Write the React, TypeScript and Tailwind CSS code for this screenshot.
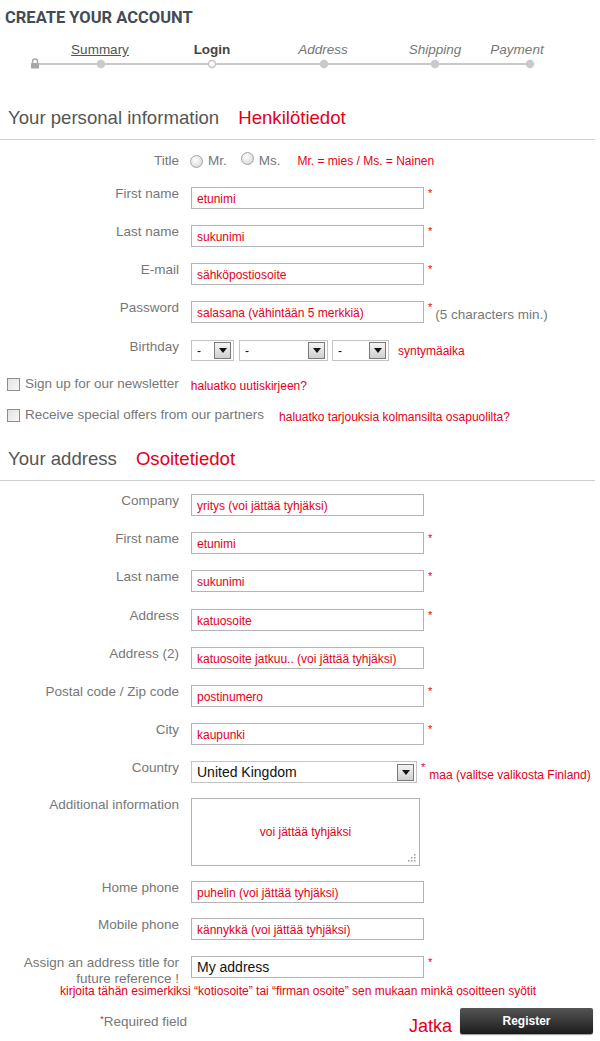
import React from "react";

const red = "text-[#e2001a]";

function Label({ children }: { children: React.ReactNode }) {
  return (
    <div className="w-[179px] shrink-0 text-right text-[13.5px] leading-4 text-[#777] -mt-[1px]">
      {children}
    </div>
  );
}

function Star() {
  return <span className={`${red} text-[11px] leading-none ml-[4px] mt-[1px]`}>*</span>;
}

function TextBox({ value, dark, w = "w-[233px]" }: { value: string; dark?: boolean; w?: string }) {
  return (
    <div
      className={`${w} h-[22px] shrink-0 border border-[#b4b4b4] bg-white pl-[5px] pt-[1px] flex items-center whitespace-nowrap overflow-hidden ${
        dark ? "text-[14px] text-[#111]" : `text-[12px] ${red}`
      }`}
    >
      {value}
    </div>
  );
}

function Row({
  label,
  value,
  req,
  mt,
  dark,
  extra,
}: {
  label: React.ReactNode;
  value: string;
  req?: boolean;
  mt: string;
  dark?: boolean;
  extra?: React.ReactNode;
}) {
  return (
    <div className={`flex items-start gap-[12px] ${mt}`}>
      <Label>{label}</Label>
      <div className="flex items-start">
        <TextBox value={value} dark={dark} />
        {req && <Star />}
        {extra}
      </div>
    </div>
  );
}

function Arrow() {
  return (
    <span className="w-[17px] h-[17px] border border-[#7a7a7a] bg-[linear-gradient(#f4f4f4,#cfcfcf)] flex items-center justify-center">
      <svg width="8" height="5" viewBox="0 0 8 5">
        <path d="M0 0 L8 0 L4 5 Z" fill="#111" />
      </svg>
    </span>
  );
}

function Select({ w, value, big }: { w: string; value: string; big?: boolean }) {
  return (
    <div
      className={`${w} ${big ? "h-[22px]" : "h-[21px]"} border border-[#c4c4c4] bg-white flex items-center justify-between pl-[5px] pr-[2px] ${
        big ? "text-[14px] text-[#111]" : "text-[12px] text-[#111]"
      }`}
    >
      <span>{value}</span>
      <Arrow />
    </div>
  );
}

function Radio() {
  return (
    <span className="inline-block w-[13px] h-[13px] rounded-full border border-[#a3a3a3] bg-[radial-gradient(circle_at_40%_35%,#ffffff,#cfcfcf)]" />
  );
}

function Check() {
  return (
    <span className="inline-block w-[13px] h-[13px] border border-[#8e8e8e] bg-[linear-gradient(135deg,#e2e2e2,#f8f8f8)] shrink-0" />
  );
}

function Heading({ en, fi, mt }: { en: string; fi: string; mt: string }) {
  return (
    <>
      <div className={`flex items-center pl-[8px] ${mt} text-[18.6px] leading-[22px]`}>
        <span className="text-[#555]">{en}</span>
        <span className={`${red} ml-[19px]`}>{fi}</span>
      </div>
      <div className="mt-[10px] mr-[5px] border-t border-[#cfcfcf]" />
    </>
  );
}

function Steps() {
  const labels: { t: string; x: number; cls: string }[] = [
    { t: "Summary", x: 100, cls: "underline text-[#555]" },
    { t: "Login", x: 212, cls: "font-bold text-[#444]" },
    { t: "Address", x: 323, cls: "italic text-[#777]" },
    { t: "Shipping", x: 435, cls: "italic text-[#777]" },
    { t: "Payment", x: 517, cls: "italic text-[#777]" },
  ];
  const dots = [101, 324, 435, 530];
  return (
    <div className="mt-[15px]">
      <div className="relative h-[16px]">
        {labels.map((l) => (
          <span
            key={l.t}
            className={`absolute top-0 -translate-x-1/2 text-[13.5px] leading-4 whitespace-nowrap ${l.cls}`}
            style={{ left: l.x }}
          >
            {l.t}
          </span>
        ))}
      </div>
      <svg className="block -mt-[1px]" width="600" height="14" viewBox="0 0 600 14">
        <line x1="36" y1="7" x2="530" y2="7" stroke="#c9c9c9" strokeWidth="2" />
        {dots.map((x) => (
          <circle key={x} cx={x} cy="7" r="4.2" fill="#c9c9c9" />
        ))}
        <circle cx="212" cy="7" r="3.5" fill="#fff" stroke="#c4c4c4" strokeWidth="1.5" />
        <path d="M32.5 6 V4.5 a2.5 2.5 0 0 1 5 0 V6" fill="none" stroke="#a6a6a6" strokeWidth="1.4" />
        <rect x="31" y="6" width="8" height="5.5" rx="0.8" fill="#a6a6a6" />
      </svg>
    </div>
  );
}

export default function App() {
  return (
    <div className="w-[600px] h-[1041px] bg-white overflow-hidden font-['Liberation_Sans',Arial,sans-serif]">
      <h1 className="pt-[9px] pl-[5px] text-[16.5px] leading-[18px] font-bold text-[#434b55] font-['Roboto',Arial,sans-serif]">
        CREATE YOUR ACCOUNT
      </h1>
      <Steps />

      <Heading en="Your personal information" fi="Henkilötiedot" mt="mt-[36px]" />

      {/* Title */}
      <div className="flex items-center gap-[11px] mt-[10px] h-[22px]">
        <div className="w-[179px] text-right text-[13.5px] leading-4 text-[#777]">Title</div>
        <div className="flex items-center text-[13.5px] text-[#777]">
          <Radio />
          <span className="ml-[5px]">Mr.</span>
          <span className="ml-[14px]">
            <Radio />
          </span>
          <span className="ml-[5px]">Ms.</span>
          <span className={`${red} text-[12px] ml-[17px]`}>Mr. = mies / Ms. = Nainen</span>
        </div>
      </div>

      <Row label="First name" value="etunimi" req mt="mt-[15px]" />
      <Row label="Last name" value="sukunimi" req mt="mt-[16px]" />
      <Row label="E-mail" value="sähköpostiosoite" req mt="mt-[16px]" />
      <Row
        label="Password"
        value="salasana (vähintään 5 merkkiä)"
        req
        mt="mt-[16px]"
        extra={<span className="text-[13.5px] text-[#777] ml-[3px] mt-[4px] whitespace-nowrap">(5 characters min.)</span>}
      />

      {/* Birthday */}
      <div className="flex items-start gap-[12px] mt-[15px]">
        <Label>Birthday</Label>
        <div className="flex items-center">
          <Select w="w-[43px]" value="-" />
          <span className="ml-[5px]">
            <Select w="w-[89px]" value="-" />
          </span>
          <span className="ml-[4px]">
            <Select w="w-[57px]" value="-" />
          </span>
          <span className={`${red} text-[12px] ml-[9px]`}>syntymäaika</span>
        </div>
      </div>

      {/* Checkboxes */}
      <div className="flex items-center pl-[7px] mt-[15px] h-[16px]">
        <Check />
        <span className="ml-[5px] text-[13.5px] text-[#777]">Sign up for our newsletter</span>
        <span className={`${red} text-[12px] ml-[12px] mt-[3px]`}>haluatko uutiskirjeen?</span>
      </div>
      <div className="flex items-center pl-[7px] mt-[15px] h-[16px]">
        <Check />
        <span className="ml-[5px] text-[13.5px] text-[#777]">Receive special offers from our partners</span>
        <span className={`${red} text-[12px] ml-[15px] mt-[3px]`}>haluatko tarjouksia kolmansilta osapuolilta?</span>
      </div>

      <Heading en="Your address" fi="Osoitetiedot" mt="mt-[25px]" />

      <Row label="Company" value="yritys (voi jättää tyhjäksi)" mt="mt-[13px]" />
      <Row label="First name" value="etunimi" req mt="mt-[16px]" />
      <Row label="Last name" value="sukunimi" req mt="mt-[16px]" />
      <Row label="Address" value="katuosoite" req mt="mt-[17px]" />
      <Row label="Address (2)" value="katuosoite jatkuu.. (voi jättää tyhjäksi)" mt="mt-[16px]" />
      <Row label="Postal code / Zip code" value="postinumero" req mt="mt-[16px]" />
      <Row label="City" value="kaupunki" req mt="mt-[16px]" />

      {/* Country */}
      <div className="flex items-start gap-[12px] mt-[16px]">
        <Label>Country</Label>
        <div className="flex items-start">
          <Select w="w-[226px]" value="United Kingdom" big />
          <Star />
          <span className={`${red} text-[12px] ml-[4px] mt-[5px] whitespace-nowrap`}>maa (valitse valikosta Finland)</span>
        </div>
      </div>

      {/* Additional information */}
      <div className="flex items-start gap-[12px] mt-[14px]">
        <Label>Additional information</Label>
        <div className="relative w-[229px] h-[68px] border border-[#b4b4b4] flex items-center justify-center">
          <span className={`${red} text-[12px]`}>voi jättää tyhjäksi</span>
          <svg className="absolute right-[3px] bottom-[3px]" width="9" height="9" viewBox="0 0 9 9">
            <g fill="#9a9a9a">
              <rect x="7" y="1" width="1.5" height="1.5" />
              <rect x="4" y="4" width="1.5" height="1.5" />
              <rect x="7" y="4" width="1.5" height="1.5" />
              <rect x="1" y="7" width="1.5" height="1.5" />
              <rect x="4" y="7" width="1.5" height="1.5" />
              <rect x="7" y="7" width="1.5" height="1.5" />
            </g>
          </svg>
        </div>
      </div>

      <Row label="Home phone" value="puhelin (voi jättää tyhjäksi)" mt="mt-[15px]" />
      <Row label="Mobile phone" value="kännykkä (voi jättää tyhjäksi)" mt="mt-[15px]" />
      <Row
        label={
          <>
            Assign an address title for
            <br />
            future reference !
          </>
        }
        value="My address"
        dark
        req
        mt="mt-[16px]"
      />

      <div className={`${red} text-[12px] leading-[12px] pl-[60px] -mt-[2px]`}>
        kirjoita tähän esimerkiksi “kotiosoite” tai “firman osoite” sen mukaan minkä osoitteen syötit
      </div>

      {/* Footer */}
      <div className="flex items-center mt-[11px] h-[26px]">
        <div className="w-[187px] text-right text-[13.5px] text-[#777] mt-[2px]">
          <sup className={`${red} text-[9px]`}>*</sup>Required field
        </div>
        <div className="flex-1" />
        <span className={`${red} text-[18px] leading-[22px] mt-[10px]`}>Jatka</span>
        <button className="ml-[8px] mr-[7px] w-[133px] h-[26px] rounded-[2px] bg-[linear-gradient(#555,#1c1c1c)] text-white text-[12px] font-bold shadow-[0_1px_1px_rgba(0,0,0,0.4)]">
          Register
        </button>
      </div>
    </div>
  );
}
